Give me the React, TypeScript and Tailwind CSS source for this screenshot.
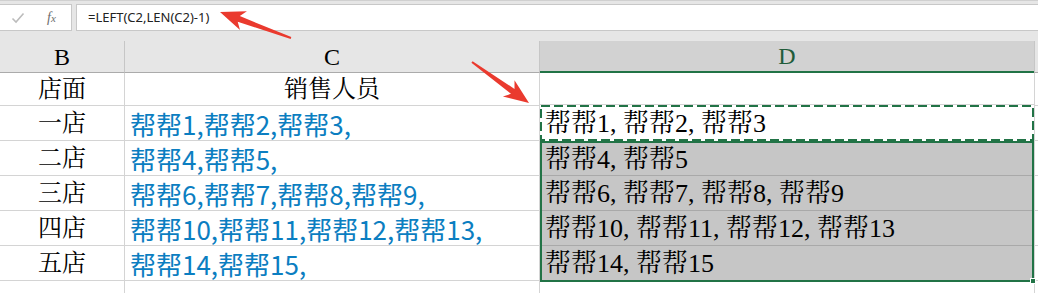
import React from "react";

type P = { x: number; y: number };

function arrowPoints(tail: P, tip: P, headLen: number, headHalf: number, wTail: number, wHead: number) {
  const dx = tip.x - tail.x;
  const dy = tip.y - tail.y;
  const L = Math.hypot(dx, dy);
  const ux = dx / L;
  const uy = dy / L;
  const nx = -uy;
  const ny = ux;
  const bx = tip.x - ux * headLen;
  const by = tip.y - uy * headLen;
  const wx = bx - ux * 5;
  const wy = by - uy * 5;
  const pts: [number, number][] = [
    [tail.x + nx * wTail / 2, tail.y + ny * wTail / 2],
    [bx + nx * wHead / 2, by + ny * wHead / 2],
    [wx + nx * headHalf, wy + ny * headHalf],
    [tip.x, tip.y],
    [wx - nx * headHalf, wy - ny * headHalf],
    [bx - nx * wHead / 2, by - ny * wHead / 2],
    [tail.x - nx * wTail / 2, tail.y - ny * wTail / 2],
  ];
  return pts.map((p) => `${p[0].toFixed(1)},${p[1].toFixed(1)}`).join(" ");
}

const rows = [
  { b: "一店", c: "帮帮1,帮帮2,帮帮3,", d: "帮帮1, 帮帮2, 帮帮3" },
  { b: "二店", c: "帮帮4,帮帮5,", d: "帮帮4, 帮帮5" },
  { b: "三店", c: "帮帮6,帮帮7,帮帮8,帮帮9,", d: "帮帮6, 帮帮7, 帮帮8, 帮帮9" },
  { b: "四店", c: "帮帮10,帮帮11,帮帮12,帮帮13,", d: "帮帮10, 帮帮11, 帮帮12, 帮帮13" },
  { b: "五店", c: "帮帮14,帮帮15,", d: "帮帮14, 帮帮15" },
];

const serif = "font-['Liberation_Serif','Noto_Serif_CJK_SC','Noto_Sans_CJK_SC',serif]";

export default function App() {
  return (
    <div className="relative w-[1038px] h-[293px] overflow-hidden bg-white">
      {/* Formula bar */}
      <div className="flex h-[30px] bg-[#e6e6e6] pt-[3px] border-t border-[#d0d0d0]">
        <div className="flex h-[27px] w-[72px] items-center border-y border-r border-[#c8c8c8] bg-white">
          <svg width="14" height="12" viewBox="0 0 14 12" className="ml-[11px]">
            <path d="M1.5 6.5 L5 10 L12.5 1.5" fill="none" stroke="#bcbcbc" strokeWidth="1.6" />
          </svg>
          <span className="ml-[22px] font-['Liberation_Serif',serif] text-[14px] italic text-[#6d6d6d]">
            f<span className="text-[11px]">x</span>
          </span>
        </div>
        <div className="ml-[4px] flex h-[27px] flex-1 items-center border-y border-l border-[#c8c8c8] bg-white pl-[11px]">
          <span className="font-['Noto_Sans','Liberation_Sans',sans-serif] text-[13px] text-[#222]">
            =LEFT(C2,LEN(C2)-1)
          </span>
        </div>
      </div>
      <div className="h-[11px] bg-[#e6e6e6]" />

      {/* Grid */}
      <div className="flex">
        {/* Column B */}
        <div className="flex w-[125px] flex-col">
          <div className={`flex h-[32px] items-center justify-center border-r border-b border-r-[#c6c6c6] border-b-[#ababab] bg-[#e6e6e6] ${serif} text-[24px] text-black`}>
            B
          </div>
          <div className={`flex h-[33px] items-center justify-center border-r border-b border-[#d4d4d4] ${serif} text-[24px] text-black`}>
            店面
          </div>
          {rows.map((r, i) => (
            <div
              key={i}
              className={`flex h-[35px] items-center justify-center border-r border-b border-[#d4d4d4] ${serif} text-[24px] text-black`}
            >
              {r.b}
            </div>
          ))}
          <div className="h-[20px] border-r border-[#d4d4d4]" />
        </div>

        {/* Column C */}
        <div className="flex w-[415px] flex-col">
          <div className={`flex h-[32px] items-center justify-center border-r border-b border-r-[#c6c6c6] border-b-[#ababab] bg-[#e6e6e6] ${serif} text-[24px] text-black`}>
            C
          </div>
          <div className={`flex h-[33px] items-center justify-center border-r border-b border-[#d4d4d4] ${serif} text-[24px] text-black`}>
            销售人员
          </div>
          {rows.map((r, i) => (
            <div
              key={i}
              className="flex h-[35px] items-center whitespace-nowrap border-r border-b border-[#d4d4d4] pl-[5px] font-['Noto_Sans_CJK_SC',sans-serif] text-[26px] text-[#0b7ec1]"
            >
              {r.c}
            </div>
          ))}
          <div className="h-[20px] border-r border-[#d4d4d4]" />
        </div>

        {/* Column D */}
        <div className="flex w-[494px] flex-col">
          <div className={`flex h-[32px] items-center justify-center border-b-2 border-[#217346] bg-[#d2d2d2] ${serif} text-[24px] text-[#1f5c3a]`}>
            D
          </div>
          <div className="h-[32px] border-b border-[#d4d4d4]" />
          <div className={`relative flex h-[36px] items-center bg-white pl-[5px] ${serif} text-[26px] text-black whitespace-nowrap`}>
            <svg className="pointer-events-none absolute inset-0" width="494" height="36">
              <rect x="1" y="1" width="492" height="34" fill="none" stroke="white" strokeWidth="2" />
              <rect x="1" y="1" width="492" height="34" fill="none" stroke="#217346" strokeWidth="2" strokeDasharray="9 4" />
            </svg>
            <span className="relative">{rows[0].d}</span>
          </div>
          <div className={`relative flex flex-col border-2 border-[#217346] bg-[#c6c6c6] ${serif} text-[26px] text-black`}>
            {rows.slice(1).map((r, i) => (
              <div
                key={i}
                className={`flex items-center whitespace-nowrap pl-[3px] ${i === 0 ? "h-[33px]" : i === 3 ? "h-[34px]" : "h-[35px]"} ${i < 3 ? "border-b border-[#a9a9a9]" : ""}`}
              >
                {r.d}
              </div>
            ))}
            <div className="absolute -bottom-[4px] -right-[4px] h-[6px] w-[6px] border border-white bg-[#217346]" />
          </div>
          <div className="h-[20px]" />
        </div>

        {/* Column E stub */}
        <div className="flex flex-1 flex-col">
          <div className="h-[32px] border-l border-b border-l-[#c6c6c6] border-b-[#ababab] bg-[#e6e6e6]" />
          <div className="h-[33px] border-l border-b border-[#d4d4d4]" />
          {rows.map((_, i) => (
            <div key={i} className="h-[35px] border-l border-b border-[#d4d4d4]" />
          ))}
          <div className="h-[20px] border-l border-[#d4d4d4]" />
        </div>
      </div>

      {/* Annotation arrows */}
      <svg className="pointer-events-none absolute left-0 top-0" width="1038" height="293">
        <polygon points={arrowPoints({ x: 291, y: 38 }, { x: 220, y: 12 }, 20, 10, 2, 6)} fill="#ea3a2e" />
        <polygon points={arrowPoints({ x: 472, y: 62 }, { x: 529, y: 103 }, 20, 10, 2, 6)} fill="#ea3a2e" />
      </svg>
    </div>
  );
}
